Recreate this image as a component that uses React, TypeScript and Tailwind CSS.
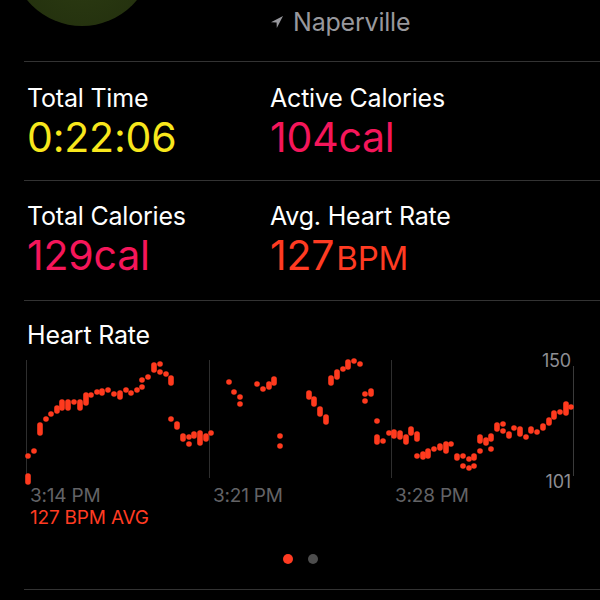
import React from 'react';

type Dot = [number, number, number?];

// heart rate samples, page coordinates (x, top, bottom of pill)
const dots: Dot[] = [
  [28, 476, 482], [28, 456], [34, 451], [40, 425, 433], [46, 419], [51, 414], [57, 408, 411],
  [62, 402, 408], [68, 402, 408], [74, 402], [80, 402, 408], [86, 395, 403], [91, 395],
  [97, 392], [102, 391, 393], [108, 390], [114, 394], [120, 393, 397], [126, 390], [131, 393],
  [137, 390], [142, 387], [142, 380], [148, 377], [154, 365, 370], [160, 364], [160, 372],
  [166, 374], [171, 378, 383], [171, 419], [177, 424, 427], [183, 436, 439], [189, 437],
  [189, 444], [194, 434, 436], [200, 433, 443], [206, 436, 439], [211, 433],
  [229, 382], [234, 392], [240, 397], [240, 404], [257, 384], [263, 389], [269, 384, 387],
  [274, 379, 383], [280, 436], [280, 446], [309, 393, 397], [314, 399, 404], [320, 409, 414],
  [326, 417, 422], [331, 378, 383], [337, 372, 377], [343, 369], [348, 362, 367], [354, 361],
  [360, 364], [365, 394], [365, 401], [371, 391, 394], [377, 421], [377, 437, 442], [383, 441],
  [389, 433], [394, 432, 436], [400, 433, 437], [406, 437, 442], [411, 429, 433], [417, 434, 439],
  [417, 456], [423, 454, 457], [428, 451, 456], [434, 449], [440, 446, 448], [446, 444, 451],
  [451, 444], [457, 456, 458], [463, 456], [463, 466], [469, 459], [469, 468], [474, 456, 458],
  [474, 466], [480, 437, 441], [480, 451], [486, 440, 443], [491, 436, 439], [491, 449],
  [497, 425, 429], [503, 424], [503, 431], [509, 434, 436], [514, 428], [520, 429, 434],
  [526, 437], [531, 429, 431], [537, 432], [543, 426, 428], [549, 420, 423], [554, 413, 417],
  [560, 412], [566, 404, 413], [571, 407],
];

const HeartChart = () => (
  <svg width="600" height="130" viewBox="0 355 600 130" className="block overflow-visible">
    {[26, 209, 391].map((x) => (
      <line key={x} x1={x + 0.5} y1={360} x2={x + 0.5} y2={478} stroke="#2e2e2e" strokeWidth="1" />
    ))}
    <line x1={573.5} y1={366} x2={573.5} y2={476} stroke="#3a3a3a" strokeWidth="1" />
    {dots.map(([x, y1, y2], i) => {
      const bottom = y2 ?? y1;
      return (
        <rect
          key={i}
          x={x - 2.8}
          y={y1 - 2.8}
          width={5.6}
          height={bottom - y1 + 5.6}
          rx={2.8}
          fill="#ff3a1e"
        />
      );
    })}
    <text x="571" y="367" textAnchor="end" fill="#8e8e93" fontSize="18" fontFamily="Inter, sans-serif">
      150
    </text>
    <text x="571" y="488" textAnchor="end" fill="#8e8e93" fontSize="18" fontFamily="Inter, sans-serif">
      101
    </text>
  </svg>
);

const Stat = ({ label, children }: { label: string; children: React.ReactNode }) => (
  <div className="flex flex-col">
    <span className="text-[25px] leading-[30px] text-white">{label}</span>
    <span className="text-[41px] leading-[46px] mt-[1px]">{children}</span>
  </div>
);

const Divider = () => <div className="ml-[24px] h-px bg-[#333333]" />;

export default function App() {
  return (
    <div className="w-[600px] h-[600px] bg-black overflow-hidden font-['Inter',sans-serif] tracking-[-0.2px]">
      <div className="relative h-[61px]">
        <div className="absolute left-[11px] top-[-116px] w-[142px] h-[142px] rounded-full bg-[radial-gradient(circle_at_50%_60%,#2c3b12,#1f2b0c)]" />
        <div className="flex items-center pl-[270px] pt-[7px] gap-[9px] text-[#98989d]">
          <svg width="14" height="14" viewBox="0 0 14 14">
            <path d="M13 1 L1 7.2 L6.6 7.4 L6.8 13 Z" fill="#98989d" />
          </svg>
          <span className="text-[25px] leading-[30px]">Naperville</span>
        </div>
      </div>
      <Divider />

      <div className="h-[118px] grid grid-cols-[243px_1fr] pl-[27px] pt-[21px]">
        <Stat label="Total Time">
          <span className="text-[#f8e71c]">0:22:06</span>
        </Stat>
        <Stat label="Active Calories">
          <span className="text-[#f5165a]">104cal</span>
        </Stat>
      </div>
      <Divider />

      <div className="h-[119px] grid grid-cols-[243px_1fr] pl-[27px] pt-[20px]">
        <Stat label="Total Calories">
          <span className="text-[#f5165a]">129cal</span>
        </Stat>
        <Stat label="Avg. Heart Rate">
          <span className="text-[#ff3b22]">
            127<span className="text-[33px] ml-[2px]">BPM</span>
          </span>
        </Stat>
      </div>
      <Divider />

      <div className="h-[54px] pl-[27px] pt-[19px]">
        <span className="text-[25px] leading-[30px] text-white">Heart Rate</span>
      </div>
      <HeartChart />

      <div className="relative h-[22px] text-[19px] leading-[22px] text-[#636366]">
        <span className="absolute left-[30px]">3:14 PM</span>
        <span className="absolute left-[213px]">3:21 PM</span>
        <span className="absolute left-[395px]">3:28 PM</span>
      </div>
      <div className="pl-[30px] h-[22px] text-[19px] leading-[22px] text-[#ff3b22]">127 BPM AVG</div>

      <div className="flex justify-center items-center gap-[15px] h-[60px] pl-[1px]">
        <span className="w-[10px] h-[10px] rounded-full bg-[#ff3b22]" />
        <span className="w-[10px] h-[10px] rounded-full bg-[#4d4d4d]" />
      </div>
      <Divider />
    </div>
  );
}
